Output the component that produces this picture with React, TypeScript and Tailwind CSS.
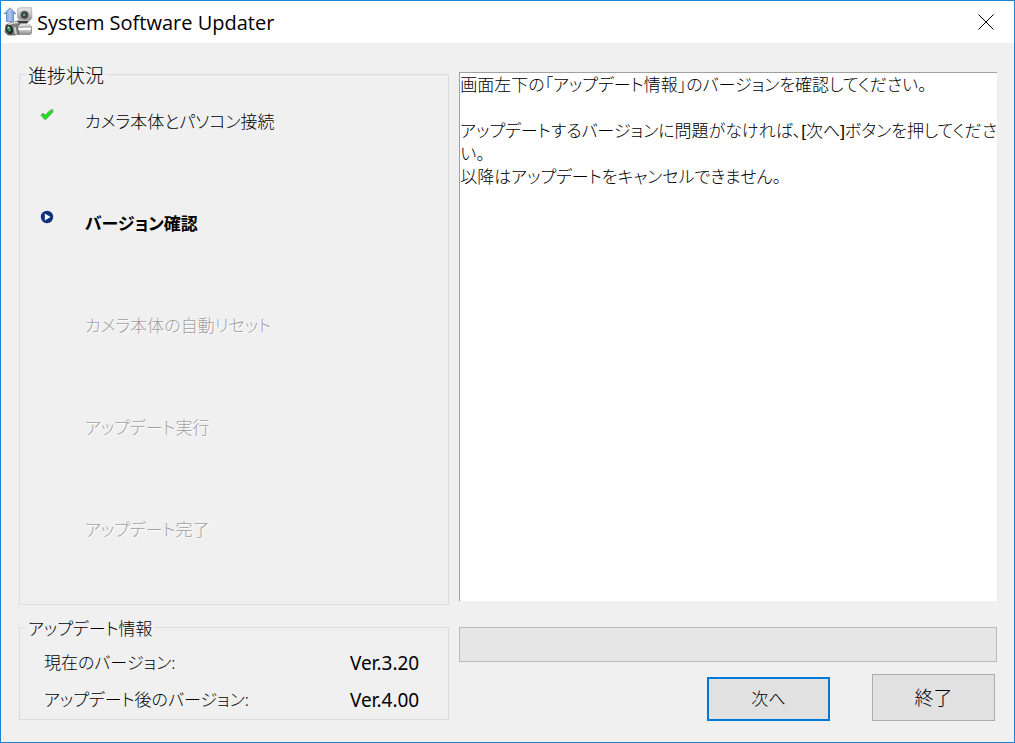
import React from "react";

type StepState = "done" | "current" | "pending";

const steps: { label: string; state: StepState }[] = [
  { label: "カメラ本体とパソコン接続", state: "done" },
  { label: "バージョン確認", state: "current" },
  { label: "カメラ本体の自動リセット", state: "pending" },
  { label: "アップデート実行", state: "pending" },
  { label: "アップデート完了", state: "pending" },
];

const versions = [
  { label: "現在のバージョン:", value: "Ver.3.20" },
  { label: "アップデート後のバージョン:", value: "Ver.4.00" },
];

const message = `画面左下の「アップデート情報」のバージョンを確認してください。

アップデートするバージョンに問題がなければ、[次へ]ボタンを押してくださ
い。
以降はアップデートをキャンセルできません。`;

const stepText: Record<StepState, string> = {
  done: "text-black",
  current: "font-bold text-black",
  pending: "text-[#a0a0a0] [text-shadow:1px_1px_0_#fff]",
};

function AppIcon() {
  return (
    <svg width="29" height="30" viewBox="0 0 29 30" aria-hidden="true">
      <defs>
        <linearGradient id="metal" x1="0" y1="0" x2="0" y2="1">
          <stop offset="0" stopColor="#ececec" />
          <stop offset="0.5" stopColor="#c4c4c4" />
          <stop offset="1" stopColor="#8a8a8a" />
        </linearGradient>
        <linearGradient id="arrow" x1="0" y1="0" x2="1" y2="0">
          <stop offset="0" stopColor="#6f93d0" />
          <stop offset="0.5" stopColor="#a9c6f2" />
          <stop offset="1" stopColor="#5a7ec0" />
        </linearGradient>
      </defs>
      <path d="M13.500 2 16 .800 27.500.800 28 11 26 13.500 15 12.500 13.500 10.500z" fill="url(#metal)" stroke="#a8a8a8" strokeWidth="0.800" />
      <circle cx="20.500" cy="8" r="4.600" fill="#8c8c8c" />
      <circle cx="20.500" cy="8" r="3.400" fill="#35423e" />
      <circle cx="20.200" cy="7.700" r="1.500" fill="#5d9c84" />
      <path d="M13 13.500 25 14l-2 2.500H14z" fill="#3c3c3c" />
      <path d="M12.500 17.500 27 17v3H13z" fill="#d8d8d8" />
      <path d="M12 20.500 27.500 19.500v7L26 27.500H13z" fill="url(#metal)" stroke="#858585" strokeWidth="0.800" />
      <path d="M14 22h13" stroke="#fafafa" strokeWidth="2" />
      <path d="M2 18 7 15.500l7-1 2 2.500-3 3 2 6-4.500 2H4L1 25z" fill="#808080" stroke="#555" strokeWidth="0.800" />
      <path d="M4 17.500 9 16l5-.500" stroke="#ddd" strokeWidth="1.500" fill="none" />
      <ellipse cx="5.500" cy="22.500" rx="3.600" ry="4.800" transform="rotate(-24 5.500 22.500)" fill="#262c29" />
      <ellipse cx="5" cy="22" rx="1.800" ry="2.800" transform="rotate(-24 5 22)" fill="#39966b" />
      <circle cx="4.500" cy="20.500" r="0.900" fill="#a9e2c5" />
      <path d="M10.500 20l1.500 7" stroke="#cfcfcf" strokeWidth="2" />
      <path d="M6 .800 11.800 6.500H9.500v8H2.500v-8H.300z" fill="url(#arrow)" stroke="#5474b4" strokeWidth="0.700" />
    </svg>
  );
}

function DoneIcon() {
  return (
    <svg className="size-3.5" viewBox="0 0 14 14" role="img" aria-label="完了">
      <path d="M1 7.200 3 5.200 5.300 7.200 10.300 2.200 12.800 1.700 12.800 4 6 11.300 4.600 11.300z" fill="#0aee0a" stroke="#6f9c6f" strokeWidth="1" />
    </svg>
  );
}

function CurrentIcon() {
  return (
    <svg className="size-3.5" viewBox="0 0 14 14" role="img" aria-label="実行中">
      <circle cx="7" cy="7" r="6.200" fill="#0c2f80" />
      <path d="M4.800 3.400 10.600 7 4.800 10.600z" fill="#fff" />
    </svg>
  );
}

type GroupProps = {
  title: string;
  className: string;
  titleClass: string;
  children: React.ReactNode;
};

function Group({ title, className, titleClass, children }: GroupProps) {
  return (
    <fieldset className={`min-w-0 border border-[#dcdcdc] ${className}`}>
      <legend className={`ml-1.5 px-0.5 pt-1 leading-5 ${titleClass}`}>{title}</legend>
      {children}
    </fieldset>
  );
}

export default function App() {
  return (
    <div className="flex min-h-screen flex-col border border-[#1883d7] bg-[#f0f0f0] font-['Noto_Sans','Noto_Sans_CJK_JP',sans-serif] text-[17px] font-light text-black [font-feature-settings:'palt']">
      <header className="flex h-[42px] items-center bg-white pl-[3px] pr-5">
        <AppIcon />
        <h1 className="ml-1 flex-1 pt-0.5 font-['Open_Sans',sans-serif] text-[20px] font-normal leading-7">System Software Updater</h1>
        <button type="button" aria-label="閉じる" className="flex size-4 items-center justify-center">
          <svg className="size-4" viewBox="0 0 16 16" fill="none" stroke="#000" strokeWidth="1">
            <path d="M.500.500 15.500 15.500M15.500.500.500 15.500" />
          </svg>
        </button>
      </header>

      <main className="grid flex-1 grid-cols-[4fr_5fr] gap-2.5 pb-[21px] pl-[18px] pr-[17px] pt-[19px]">
        <div className="flex min-w-0 flex-col gap-2.5 pb-px">
          <Group title="進捗状況" className="flex-1" titleClass="text-[19px]">
            <ol className="flex flex-col gap-[77px] pl-5 pt-[22px]">
              {steps.map((step) => (
                <li key={step.label} className="flex items-start" aria-current={step.state === "current" ? "step" : undefined}>
                  <span className="w-[45px] shrink-0">
                    {step.state === "done" && <DoneIcon />}
                    {step.state === "current" && <CurrentIcon />}
                  </span>
                  <span className={`pt-[3px] leading-[22px] ${stepText[step.state]}`}>{step.label}</span>
                </li>
              ))}
            </ol>
          </Group>

          <Group title="アップデート情報" className="pb-2" titleClass="text-[17px]">
            <dl className="flex flex-col gap-[15px] pl-6 pr-[29px] pt-[13px] leading-[22px]">
              {versions.map((v) => (
                <div key={v.label} className="flex justify-between">
                  <dt>{v.label}</dt>
                  <dd className="text-[19px] font-normal">{v.value}</dd>
                </div>
              ))}
            </dl>
          </Group>
        </div>

        <div className="flex min-w-0 flex-col pt-2.5">
          <textarea
            readOnly
            aria-label="説明"
            value={message}
            className="w-full flex-1 resize-none overflow-hidden whitespace-pre border-l border-t border-[#a0a0a0] bg-white pt-px font-['Liberation_Sans','Noto_Sans_CJK_JP',sans-serif] leading-[23px] outline-none"
          />
          <progress
            value={0}
            max={100}
            aria-label="アップデートの進行"
            className="mt-[26px] h-[35px] w-full appearance-none border border-[#bcbcbc] bg-[#e6e6e6] [&::-webkit-progress-bar]:bg-[#e6e6e6] [&::-webkit-progress-value]:bg-[#06b025]"
          />
          <div className="mt-3 flex items-end justify-end gap-[42px] pr-0.5">
            <button type="button" className="h-11 w-[123px] border-2 border-[#0078d7] bg-[#e1e1e1]">次へ</button>
            <button type="button" className="h-[47px] w-[123px] border border-[#adadad] bg-[#e1e1e1] pt-0.5 text-[19px]">終了</button>
          </div>
        </div>
      </main>
    </div>
  );
}
